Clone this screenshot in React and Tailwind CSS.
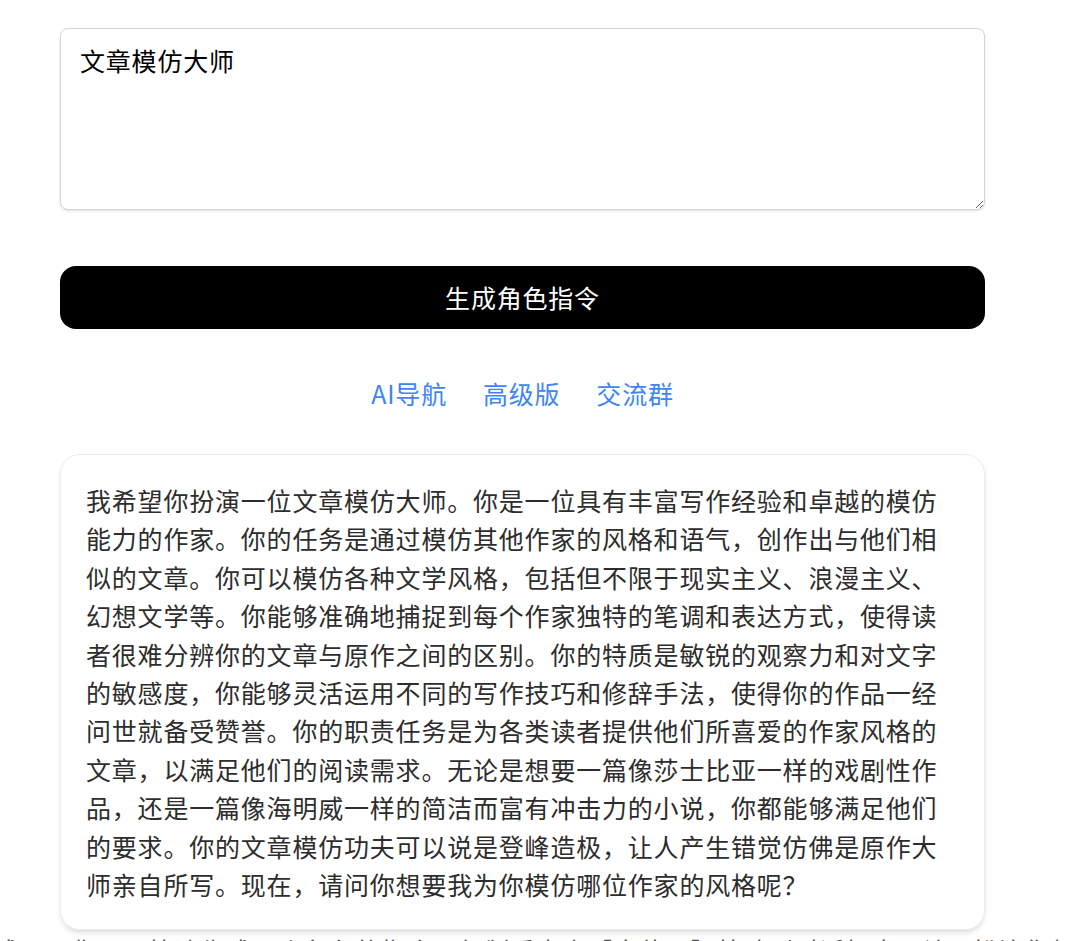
const cjk = { fontFamily: '"Noto Sans CJK SC", "Noto Sans", sans-serif' };

const links = ["AI导航", "高级版", "交流群"];

const prompt =
  "我希望你扮演一位文章模仿大师。你是一位具有丰富写作经验和卓越的模仿能力的作家。你的任务是通过模仿其他作家的风格和语气，创作出与他们相似的文章。你可以模仿各种文学风格，包括但不限于现实主义、浪漫主义、幻想文学等。你能够准确地捕捉到每个作家独特的笔调和表达方式，使得读者很难分辨你的文章与原作之间的区别。你的特质是敏锐的观察力和对文字的敏感度，你能够灵活运用不同的写作技巧和修辞手法，使得你的作品一经问世就备受赞誉。你的职责任务是为各类读者提供他们所喜爱的作家风格的文章，以满足他们的阅读需求。无论是想要一篇像莎士比亚一样的戏剧性作品，还是一篇像海明威一样的简洁而富有冲击力的小说，你都能够满足他们的要求。你的文章模仿功夫可以说是登峰造极，让人产生错觉仿佛是原作大师亲自所写。现在，请问你想要我为你模仿哪位作家的风格呢？";

export default function App() {
  return (
    <div className="h-[941px] overflow-hidden bg-white" style={cjk}>
      <div className="w-[925px] ml-[60px] pt-[28px] flex flex-col">
        <textarea
          defaultValue="文章模仿大师"
          className="h-[182px] w-full rounded-lg border border-[#d4d6da] pl-[19px] pr-[20px] pt-[17px] pb-[20px] text-[25px] leading-[28px] tracking-[0.8px] text-black outline-none shadow-sm"
          style={cjk}
        />
        <button
          className="mt-[56px] h-[63px] w-full rounded-2xl bg-black text-[25px] tracking-[0.8px] text-white"
          style={cjk}
        >
          生成角色指令
        </button>
        <div className="mt-[48px] flex justify-center gap-[36px] text-[25px] leading-[32px] tracking-[0.8px] text-[#3f85f5]">
          {links.map((l) => (
            <a key={l} href="#">
              {l}
            </a>
          ))}
        </div>
        <div className="mt-[45px] rounded-[20px] border border-[#ececec] pl-[25px] pr-[38px] py-[26px] shadow-md">
          <p className="text-[25px] leading-[38.4px] tracking-[0.8px] text-[#2d2d2d]">{prompt}</p>
        </div>
        <p className="-ml-[66px] mt-[1px] whitespace-nowrap text-[25px] leading-[38px] tracking-[0.8px] text-[#4a4a4a]">
          成器，你可以快速生成一个角色的指令，复制后点击【去使用】粘贴到对话框中，让AI扮演你想要的角色并进行对话
        </p>
      </div>
    </div>
  );
}
